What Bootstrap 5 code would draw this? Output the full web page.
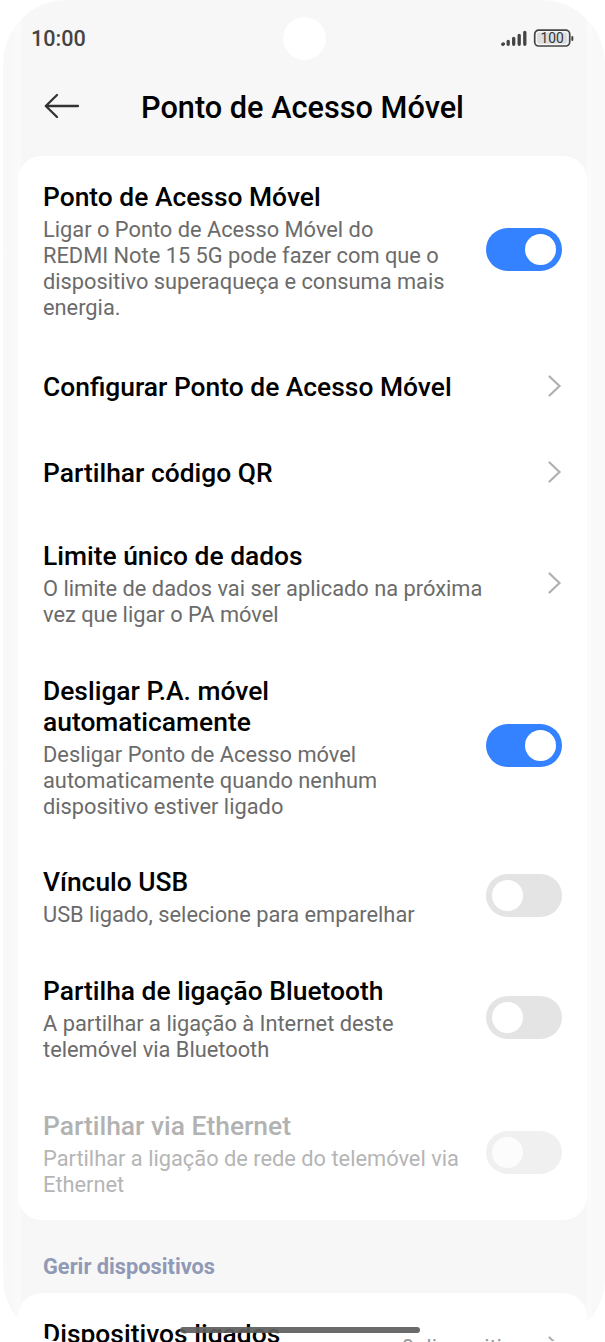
<!DOCTYPE html>
<html lang="pt">
<head>
  <meta charset="UTF-8" />
  <meta name="viewport" content="width=device-width, initial-scale=1.0"/>
  <title>Ponto de Acesso Móvel</title>
  <link rel="stylesheet" href="https://cdn.jsdelivr.net/npm/bootstrap@5.3.0/dist/css/bootstrap.min.css"/>
  <style>
    body {
      font-family: Roboto, "Liberation Sans", sans-serif;
      color: #000;
      background: #fff;
    }
    .phone {
      height: 1342px;
      margin-left: 3px;
      padding: 0 15px;
      border-radius: 64px;
      background: linear-gradient(90deg, #f9f9f9 0, #f8f8f8 5px, #f9f9f9 12px, #fbfbfb 16px, #f7f7f7 20px, #f7f7f7 582px, #fbfbfb 586px, #f8f8f8 591px, #f9f9f9 100%);
    }
    .status-bar {
      height: 76px;
      padding: 0 16px 0 13px;
      color: #444;
    }
    .clock {
      font-size: 21.6px;
      font-weight: 500;
      line-height: 26px;
      padding-top: 2px;
    }
    .camera {
      width: 43px;
      height: 43px;
      top: 17px;
      left: 280px;
    }
    .page-header {
      height: 80px;
    }
    .back-icon {
      left: 26px;
      top: 17px;
    }
    .page-title {
      font-size: 30.7px;
      font-weight: 500;
      line-height: 36px;
      padding: 14px 3px 0 0;
    }
    .panel {
      width: 569px;
      padding-bottom: 1px;
      border-radius: 24px;
      background: #fff;
    }
    .setting {
      min-height: 86.4px;
      padding: 26px 25px 21.8px;
    }
    .setting-single {
      padding-top: 25px;
      padding-bottom: 22px;
    }
    .setting-title {
      font-size: 26.4px;
      font-weight: 500;
      line-height: 31px;
    }
    .setting-text {
      margin-top: 4px;
      font-size: 21.82px;
      line-height: 25.9px;
      color: #6b6b6b;
    }
    .disabled .setting-title {
      color: #b2b2b2;
    }
    .disabled .setting-text {
      color: #b5b5b5;
    }
    .switch {
      width: 76px;
      height: 43px;
      padding: 6px;
      margin-top: -4px;
      background: #e4e4e4;
    }
    .switch.on {
      background: #3482ff;
    }
    .disabled .switch {
      background: #f0f0f0;
    }
    .knob {
      width: 31px;
      height: 31px;
      background: #fff;
    }
    .disabled .knob {
      background: #fcfcfc;
    }
    .chevron {
      margin-top: -3px;
    }
    .section-label {
      height: 73px;
      padding: 33px 25px 0;
      font-size: 21.8px;
      font-weight: 700;
      line-height: 28px;
      color: #9099b5;
    }
    .panel-last {
      height: 50px;
      border-radius: 24px 24px 0 0;
    }
    .device-count {
      margin: 16px 11px 0 0;
      color: #999;
    }
    .panel-last .chevron {
      margin-top: 16px;
    }
    .home-bar {
      width: 240px;
      height: 6px;
      left: 177px;
      bottom: 9px;
      background: #5f5f5f;
      opacity: .93;
    }
  </style>
</head>
<body>
  <div class="phone position-relative overflow-hidden">
    <div class="status-bar d-flex justify-content-between align-items-center">
      <div class="clock">10:00</div>
      <div class="d-flex align-items-center">
        <svg width="74" height="18" viewBox="0 0 74 18" fill="none" stroke="#444">
          <g stroke-width="3.3" stroke-linecap="round">
            <path d="M2.8 15.3l.6-.4M8.2 15.3v-3M13.7 15.3v-6M19.2 15.3v-9M24.8 15.3v-12"/>
          </g>
          <rect x="34.7" y="1.2" width="35" height="15.8" rx="4" stroke-width="1.7"/>
          <rect x="37" y="3.4" width="30.4" height="11.4" rx="2" fill="#dedede" stroke="none"/>
          <path d="M72.3 8v3" stroke-width="2" stroke-linecap="round"/>
          <text x="52.2" y="14" text-anchor="middle" font-size="13.8" font-weight="400" fill="#333" stroke="none">100</text>
        </svg>
      </div>
    </div>
    <div class="camera position-absolute rounded-circle bg-white"></div>

    <div class="page-header position-relative text-center">
      <svg class="back-icon position-absolute" width="36" height="26" viewBox="0 0 36 26" fill="none" stroke="#333" stroke-width="2.3" stroke-linecap="round" stroke-linejoin="round">
        <path d="M34 13H1.8M13 2L1.8 13L13 24"/>
      </svg>
      <h1 class="page-title m-0">Ponto de Acesso Móvel</h1>
    </div>

    <div class="panel">
      <div class="setting d-flex justify-content-between align-items-center">
        <div>
          <div class="setting-title">Ponto de Acesso Móvel</div>
          <div class="setting-text">Ligar o Ponto de Acesso Móvel do<br>REDMI Note 15 5G pode fazer com que o<br>dispositivo superaqueça e consuma mais<br>energia.</div>
        </div>
        <div class="switch on rounded-pill d-flex justify-content-end flex-shrink-0"><div class="knob rounded-circle"></div></div>
      </div>

      <div class="setting setting-single d-flex justify-content-between align-items-center">
        <div class="setting-title">Configurar Ponto de Acesso Móvel</div>
        <svg class="chevron" width="15" height="24" viewBox="0 0 15 24" fill="none" stroke="#b0b0b0" stroke-width="2.2" stroke-linecap="round"><path d="M2.5 2.5L12.5 12L2.5 21.5"/></svg>
      </div>

      <div class="setting setting-single d-flex justify-content-between align-items-center">
        <div class="setting-title">Partilhar código QR</div>
        <svg class="chevron" width="15" height="24" viewBox="0 0 15 24" fill="none" stroke="#b0b0b0" stroke-width="2.2" stroke-linecap="round"><path d="M2.5 2.5L12.5 12L2.5 21.5"/></svg>
      </div>

      <div class="setting d-flex justify-content-between align-items-center">
        <div>
          <div class="setting-title">Limite único de dados</div>
          <div class="setting-text">O limite de dados vai ser aplicado na próxima<br>vez que ligar o PA móvel</div>
        </div>
        <svg class="chevron" width="15" height="24" viewBox="0 0 15 24" fill="none" stroke="#b0b0b0" stroke-width="2.2" stroke-linecap="round"><path d="M2.5 2.5L12.5 12L2.5 21.5"/></svg>
      </div>

      <div class="setting d-flex justify-content-between align-items-center">
        <div>
          <div class="setting-title">Desligar P.A. móvel<br>automaticamente</div>
          <div class="setting-text">Desligar Ponto de Acesso móvel<br>automaticamente quando nenhum<br>dispositivo estiver ligado</div>
        </div>
        <div class="switch on rounded-pill d-flex justify-content-end flex-shrink-0"><div class="knob rounded-circle"></div></div>
      </div>

      <div class="setting d-flex justify-content-between align-items-center">
        <div>
          <div class="setting-title">Vínculo USB</div>
          <div class="setting-text">USB ligado, selecione para emparelhar</div>
        </div>
        <div class="switch rounded-pill d-flex flex-shrink-0"><div class="knob rounded-circle"></div></div>
      </div>

      <div class="setting d-flex justify-content-between align-items-center">
        <div>
          <div class="setting-title">Partilha de ligação Bluetooth</div>
          <div class="setting-text">A partilhar a ligação à Internet deste<br>telemóvel via Bluetooth</div>
        </div>
        <div class="switch rounded-pill d-flex flex-shrink-0"><div class="knob rounded-circle"></div></div>
      </div>

      <div class="setting disabled d-flex justify-content-between align-items-center">
        <div>
          <div class="setting-title">Partilhar via Ethernet</div>
          <div class="setting-text">Partilhar a ligação de rede do telemóvel via<br>Ethernet</div>
        </div>
        <div class="switch rounded-pill d-flex flex-shrink-0"><div class="knob rounded-circle"></div></div>
      </div>
    </div>

    <div class="section-label">Gerir dispositivos</div>

    <div class="panel panel-last">
      <div class="setting d-flex justify-content-between align-items-start">
        <div class="setting-title">Dispositivos ligados</div>
        <div class="d-flex align-items-start">
          <div class="setting-text device-count text-nowrap">0 dispositivos</div>
          <svg class="chevron" width="15" height="24" viewBox="0 0 15 24" fill="none" stroke="#b0b0b0" stroke-width="2.2" stroke-linecap="round"><path d="M2.5 2.5L12.5 12L2.5 21.5"/></svg>
        </div>
      </div>
    </div>

    <div class="home-bar position-absolute rounded-pill"></div>
  </div>

  <script src="https://cdn.jsdelivr.net/npm/bootstrap@5.3.0/dist/js/bootstrap.bundle.min.js"></script>
</body>
</html>
